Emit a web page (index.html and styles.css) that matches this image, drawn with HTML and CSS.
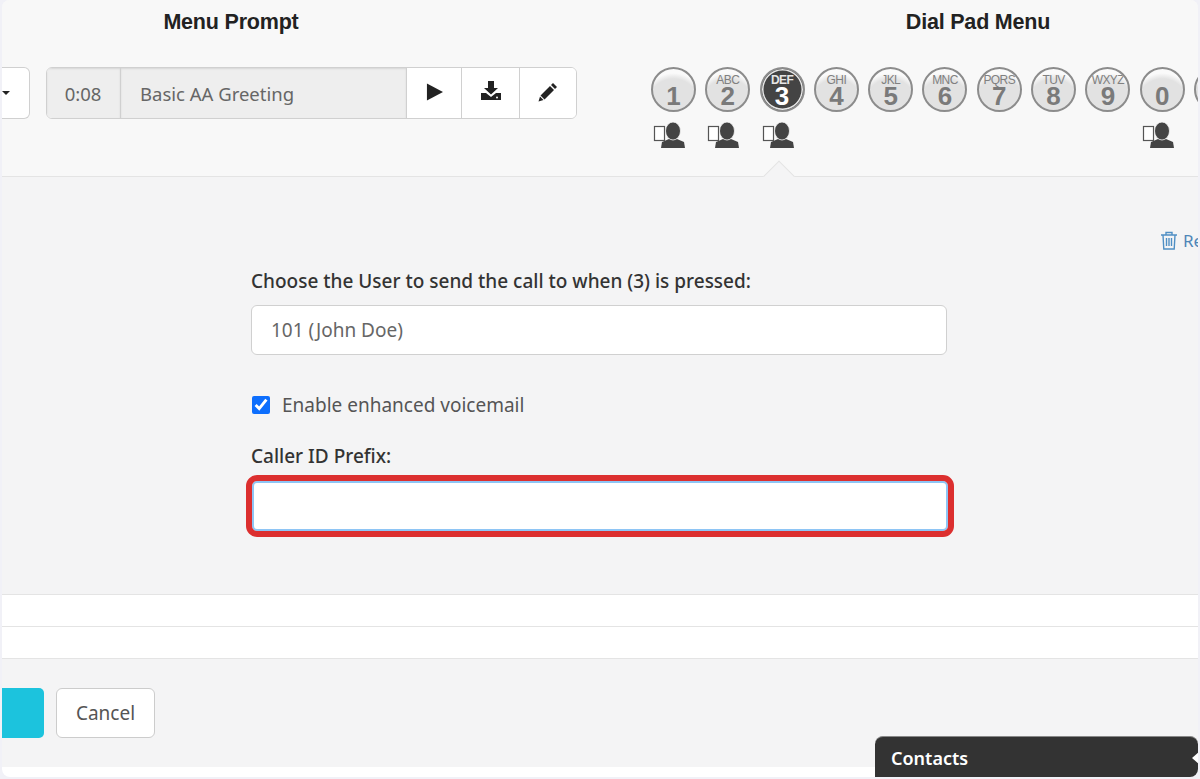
FILE: index.html
```html
<!DOCTYPE html>
<html lang="en">
<head>
<meta charset="utf-8">
<title>Dial Pad Menu</title>
<link rel="stylesheet" href="styles.css">
</head>
<body>
<div class="card">
<div class="panel">
  <section class="top">
    <div class="col-prompt">
      <h2 class="title">Menu Prompt</h2>
      <div class="prompt-row">
        <div class="dropdown"><span class="caret"></span></div>
        <div class="audio">
          <span class="time">0:08</span>
          <span class="name">Basic AA Greeting</span>
          <button class="tool t-play" aria-label="Play"><svg width="17" height="18" viewBox="0 0 18 18"><path d="M1 0 18 9 1 18z" fill="#222"/></svg></button>
          <button class="tool t-down" aria-label="Download"><svg width="22" height="20" viewBox="0 0 22 20"><path d="M8 0h6v7h4l-7 6.500L4 7h4z" fill="#222"/><path d="M1 12h5l5 4 5-4h5v7H1z" fill="#222"/><circle cx="17" cy="16.500" r="1" fill="#fff"/></svg></button>
          <button class="tool t-edit" aria-label="Edit"><svg width="20" height="20" viewBox="0 0 20 20"><path d="M15 1l4 4-2 2-4-4zM12 4l4 4-9.500 9.500-4-4zM2 14.500l3.500 3.500L0.500 19.500z" fill="#222"/></svg></button>
        </div>
      </div>
    </div>
    <div class="col-pad">
      <h2 class="title">Dial Pad Menu</h2>
      <div class="pad">
        <div class="key"><div class="num only">1</div><svg class="user" width="32" height="27" viewBox="0 0 32 27"><use href="#usr"/></svg></div>
        <div class="key"><div class="num"><small>ABC</small>2</div><svg class="user" width="32" height="27" viewBox="0 0 32 27"><use href="#usr"/></svg></div>
        <div class="key"><div class="num active"><small>DEF</small>3</div><svg class="user" width="32" height="27" viewBox="0 0 32 27"><use href="#usr"/></svg></div>
        <div class="key"><div class="num"><small>GHI</small>4</div></div>
        <div class="key"><div class="num"><small>JKL</small>5</div></div>
        <div class="key"><div class="num"><small>MNC</small>6</div></div>
        <div class="key"><div class="num"><small>PQRS</small>7</div></div>
        <div class="key"><div class="num"><small>TUV</small>8</div></div>
        <div class="key"><div class="num"><small>WXYZ</small>9</div></div>
        <div class="key"><div class="num only">0</div><svg class="user" width="32" height="27" viewBox="0 0 32 27"><use href="#usr"/></svg></div>
        <div class="key"><div class="num only"></div></div>
      </div>
    </div>
    <span class="notch"></span>
  </section>

  <section class="detail">
    <a class="remove" href="#"><svg width="18" height="19" viewBox="0 0 18 19" fill="none" stroke="#4f8fc4" stroke-width="1.400"><path d="M1 4h16M6 4V1.500h6V4M3 4l.800 14h10.400L15 4M6.500 7v8M9 7v8M11.500 7v8"/></svg><span>Remove</span></a>
    <form class="form">
      <label class="label">Choose the User to send the call to when (3) is pressed:</label>
      <input class="field" type="text" value="101 (John Doe)">
      <label class="check"><input type="checkbox" checked><span>Enable enhanced voicemail</span></label>
      <label class="label label-prefix">Caller ID Prefix:</label>
      <input class="field focused" type="text">
    </form>
  </section>

  <div class="rows">
    <div class="row"></div>
    <div class="row"></div>
  </div>

  <div class="actions">
    <button class="btn-save" aria-label="Save"></button>
    <button class="btn-cancel">Cancel</button>
  </div>
</div>

<div class="contacts">
  <span>Contacts</span>
  <svg class="contacts-arrow" width="12" height="16" viewBox="0 0 12 16"><path d="M0 8l8-7v14z" fill="#fff"/></svg>
</div>
</div>

<svg class="defs" width="0" height="0">
  <symbol id="usr" viewBox="0 0 32 27">
    <rect x="1.500" y="4.500" width="10" height="14" fill="#fff" stroke="#555" stroke-width="1.200"/>
    <path d="M8 26l1-6 7-3h8l7 3 1 6z" fill="#444"/>
    <ellipse cx="20" cy="9" rx="7.500" ry="9" fill="#444" stroke="#f6f6f6" stroke-width="0.800"/>
  </symbol>
</svg>
</body>
</html>
```
FILE: styles.css
```css
* { box-sizing: border-box; }
html, body { margin: 0; height: 779px; overflow: hidden; background: #f1f1f7; }
body { font-family: "Noto Sans", "Open Sans", sans-serif; color: #333; padding: 0 2px 2px; }

.card {
  position: relative;
  height: 777px;
  background: #fff;
  border-radius: 8px;
  overflow: hidden;
}
.panel {
  height: 767px;
  background: #f4f4f5;
  display: flex;
  flex-direction: column;
  overflow: hidden;
}

.top {
  position: relative;
  height: 177px;
  flex: none;
  background: #f8f8f8;
  border-bottom: 1px solid #e4e4e4;
  display: flex;
}
.title {
  margin: 0;
  font: bold 21.500px/44px "Liberation Sans", Arial, sans-serif;
  letter-spacing: -0.2px;
  color: #222;
  text-align: center;
}
.col-prompt { width: 575px; flex: none; }
.col-prompt .title { width: 458px; }
.prompt-row { display: flex; gap: 16px; margin-top: 23px; height: 52px; }
.dropdown {
  width: 28px;
  background: #fff;
  border: 1px solid #d0d0d0;
  border-left: 0;
  border-radius: 0 6px 6px 0;
  display: flex;
  align-items: center;
}
.caret {
  width: 0; height: 0;
  border: 4px solid transparent;
  border-top: 4px solid #222;
  border-bottom: 0;
}
.audio {
  width: 531px;
  display: flex;
  border: 1px solid #d0d0d0;
  border-radius: 6px;
  background: #fff;
  overflow: hidden;
}
.time, .name {
  background: #eee;
  color: #666;
  display: flex;
  align-items: center;
  border-right: 1px solid #d0d0d0;
  box-shadow: inset 0 1px 2px rgba(0,0,0,.1);
}
.time { width: 74px; justify-content: center; font-size: 18.500px; padding-right: 1px; }
.name { width: 286px; padding-left: 19px; font-size: 18.500px; }
.tool {
  background: #fff;
  border: 0;
  border-right: 1px solid #d0d0d0;
  padding: 0;
  display: flex;
  align-items: center;
  justify-content: center;
}
.t-play { width: 55px; padding-bottom: 3px; }
.t-down { width: 58px; padding-bottom: 4px; }
.t-edit { flex: 1; border-right: 0; padding-bottom: 3px; }

.col-pad { flex: 1; padding-left: 74px; min-width: 0; }
.col-pad .title { width: 654px; }
.pad { display: flex; margin-top: 23px; width: 640px; }
.key { width: 54.300px; flex: none; }
.num {
  width: 45px;
  height: 45px;
  border-radius: 50%;
  border: 2.500px solid #8c8c8c;
  background: radial-gradient(circle at 50% 85%, #e2e2e2 0 62%, #fafafa 76%);
  color: #7a7a7a;
  font: bold 26px/22px "Liberation Sans", Arial, sans-serif;
  text-align: center;
  display: flex;
  flex-direction: column;
  align-items: center;
  padding-top: 6px;
  overflow: hidden;
}
.num small {
  font-size: 12px;
  line-height: 10px;
  font-weight: normal;
  letter-spacing: -0.600px;
  color: #808080;
}
.num.only { padding-top: 16px; }
.num.active {
  background: #444;
  color: #fff;
  border-color: #8c8c8c;
  box-shadow: inset 0 0 0 1.500px #e8e8e8;
}
.num.active small { color: #e6e6e6; font-weight: bold; }
.user { display: block; margin: 10px 0 0 2px; }
.defs { position: absolute; }
.notch {
  position: absolute;
  left: 766px;
  top: 165px;
  width: 22px;
  height: 22px;
  background: #f4f4f5;
  border-top: 1px solid #e4e4e4;
  border-left: 1px solid #e4e4e4;
  transform: rotate(45deg);
}

.detail { flex: none; height: 417px; position: relative; }
.remove {
  position: absolute;
  left: 1158px;
  top: 52px;
  display: flex;
  gap: 5px;
  align-items: center;
  color: #4f86b8;
  font-size: 17px;
  text-decoration: none;
  white-space: nowrap;
}
.remove svg { flex: none; }
.form {
  width: 696px;
  margin-left: 249px;
  padding-top: 91px;
  display: flex;
  flex-direction: column;
}
.label { font-size: 19px; line-height: 26px; font-weight: 500; color: #333; }
.field {
  height: 50px;
  margin-top: 11px;
  border: 1px solid #d0d0d0;
  border-radius: 6px;
  background: #fff;
  padding: 0 19px;
  font: 19px "Noto Sans", sans-serif;
  color: #666;
}
.check {
  display: flex;
  align-items: center;
  gap: 12px;
  margin-top: 37px;
  height: 26px;
  font-size: 19px;
  color: #555;
}
.check input { width: 18px; height: 18px; margin: 0 0 0 1px; accent-color: #0d6efd; }
.label-prefix { margin-top: 25px; }
.focused {
  height: 50px;
  margin: 12px -1px 0 1px;
  border: 2px solid #8ec5f5;
  outline: 6px solid #dc2f2f;
  outline-offset: 0;
  border-radius: 5px;
}

.rows { flex: none; }
.row { height: 32px; background: #fff; border-top: 1px solid #e4e4e4; }
.row:last-child { height: 33px; border-bottom: 1px solid #e4e4e4; }

.actions {
  flex: 1;
  display: flex;
  gap: 12px;
  padding-top: 29px;
  align-items: flex-start;
}
.btn-save {
  width: 42px;
  height: 50px;
  border: 0;
  border-radius: 0 5px 5px 0;
  background: #1cc3dd;
}
.btn-cancel {
  width: 99px;
  height: 50px;
  background: #fff;
  border: 1px solid #ccc;
  border-radius: 6px;
  font: 19px "Noto Sans", sans-serif;
  color: #555;
}

.contacts {
  position: absolute;
  left: 873px;
  top: 736px;
  width: 323px;
  height: 41px;
  background: #333;
  border-top: 1px solid #888;
  border-radius: 8px 8px 0 0;
  color: #fff;
  font-size: 18px;
  font-weight: 600;
  display: flex;
  align-items: center;
  justify-content: space-between;
  padding: 1px 0 0 16px;
}
.contacts-arrow { margin-right: -6px; }
```
